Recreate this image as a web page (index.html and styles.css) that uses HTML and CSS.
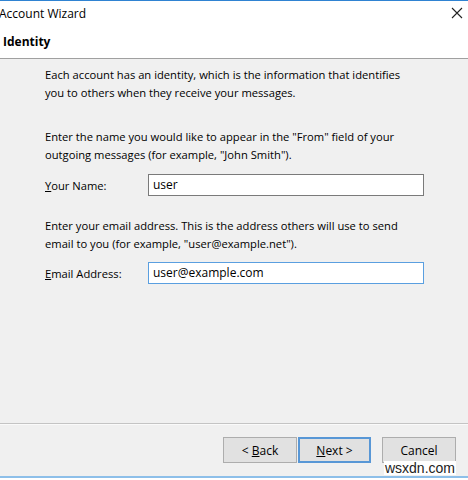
FILE: index.html
```html
<!DOCTYPE html>
<html>
<head>
<meta charset="utf-8">
<link rel="stylesheet" href="styles.css">
</head>
<body>
<div class="window">
  <div class="titlebar">
    <span class="title">Account Wizard</span>
    <svg class="close" width="12" height="12" viewBox="0 0 12 12"><path d="M1 1 L11 11 M11 1 L1 11" stroke="#222" stroke-width="1.1" fill="none"/></svg>
  </div>
  <div class="header"><span class="heading">Identity</span></div>
  <div class="content">
    <p class="para">Each account has an identity, which is the information that identifies you to others when they receive your messages.</p>
    <p class="para gap-lg">Enter the name you would like to appear in the "From" field of your outgoing messages (for example, "John Smith").</p>
    <div class="field name-row">
      <label class="label"><u>Y</u>our Name:</label>
      <div class="input">user</div>
    </div>
    <p class="para email-para">Enter your email address. This is the address others will use to send email to you (for example, "user@example.net").</p>
    <div class="field email-row">
      <label class="label"><u>E</u>mail Address:</label>
      <div class="input focused">user@example.com</div>
    </div>
  </div>
  <div class="footer">
    <div class="btn back"><span>&lt; <u>B</u>ack</span></div>
    <div class="btn next"><span><u>N</u>ext &gt;</span></div>
    <div class="btn cancel"><span>Cancel</span></div>
  </div>
  <div class="watermark">wsxdn.com</div>
</div>
</body>
</html>
```
FILE: styles.css
```css
* { box-sizing: border-box; }
html, body { margin: 0; padding: 0; background: #ffffff; }
body {
  width: 468px;
  height: 480px;
  font-family: "Open Sans", "Noto Sans", sans-serif;
  font-size: 11.2px;
  color: #000;
  overflow: hidden;
}
.window {
  position: relative;
  width: 468px;
  height: 478px;
  display: flex;
  flex-direction: column;
  border-top: 1px solid #2f83d2;
  border-bottom: 2px solid #8dbfe9;
  background: #f0f0f0;
}
.titlebar {
  height: 24px;
  background: #fff;
  display: flex;
  align-items: center;
  justify-content: space-between;
  padding: 0 5px 0 0;
}
.title { font-size: 12px; margin-left: -1px; }
.header {
  height: 34px;
  background: #fff;
  border-bottom: 1px solid #a0a0a0;
  display: flex;
  align-items: center;
  padding: 0 0 1px 3px;
}
.heading { font-weight: bold; font-size: 12px; }
.content {
  flex: 1;
  padding: 7px 0 0 45px;
}
.para {
  margin: 0;
  line-height: 18px;
  width: 362px;
}
.gap-lg { margin-top: 26px; }
.field {
  display: flex;
  align-items: center;
  height: 22px;
}
.name-row { margin-top: 10px; }
.email-para { margin-top: 21px; }
.email-row { margin-top: 9px; }
.label { width: 103px; }
.input {
  width: 276px;
  height: 22px;
  background: #fff;
  border: 1px solid #7a7a7a;
  padding: 0 4px;
  line-height: 20px;
  font-size: 12px;
}
.input.focused { border-color: #5a9fe0; }
.footer {
  height: 53px;
  border-top: 1px solid #c4c4c4;
  box-shadow: inset 0 1px 0 #fafafa;
  display: flex;
  justify-content: flex-end;
  align-items: flex-start;
  padding: 13px 12px 0 0;
}
.btn {
  height: 26px;
  width: 74px;
  background: #e1e1e1;
  border: 1px solid #adadad;
  display: flex;
  align-items: center;
  justify-content: center;
  font-size: 12px;
}
.next {
  width: 73px;
  margin-left: 1px;
  border: 2px solid #5897d6;
}
.cancel { margin-left: 11px; }
.watermark {
  position: absolute;
  right: 12px;
  bottom: 1px;
  font-family: "Liberation Sans", Arial, sans-serif;
  font-size: 14px;
  color: #222;
  background: #fff;
  padding: 0 1px;
  line-height: 14px;
}
```
